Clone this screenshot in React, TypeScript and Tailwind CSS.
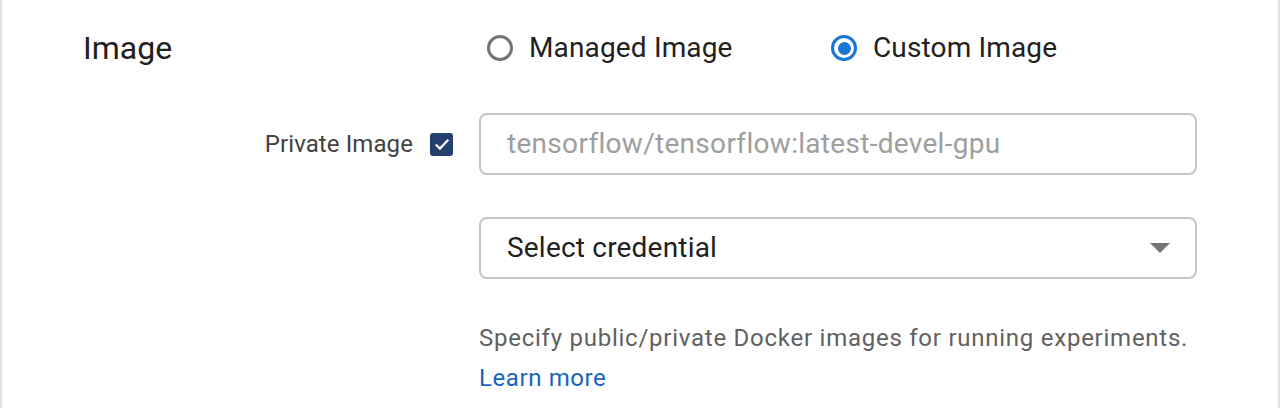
import { useState } from "react";

const Radio = ({ checked, label }: { checked: boolean; label: string }) => (
  <label className="flex items-center gap-4 cursor-pointer">
    <span
      className={`w-[26px] h-[26px] rounded-full border-[3px] flex items-center justify-center ${
        checked ? "border-[#1976d2]" : "border-[#757575]"
      }`}
    >
      {checked && <span className="w-[13px] h-[13px] rounded-full bg-[#1976d2]" />}
    </span>
    <span className="text-[28px] tracking-[0.15px] text-[#212121]">{label}</span>
  </label>
);

const App = () => {
  const [custom] = useState(true);

  return (
    <div className="h-[408px] w-[1280px] bg-white border-l-2 border-r-2 border-[#e0e0e0] font-['Roboto',sans-serif] overflow-hidden">
      <div className="flex h-[52px] mt-[22px] leading-[52px]">
        <div className="w-[477px] pl-[81px] text-[32px] text-[#212121]">Image</div>
        <div className="flex items-center">
          <div className="w-[352px] pl-[8px]">
            <Radio checked={!custom} label="Managed Image" />
          </div>
          <Radio checked={custom} label="Custom Image" />
        </div>
      </div>

      <div className="flex mt-[39px]">
        <div className="w-[477px] flex items-center justify-end gap-[17px] pr-[26px]">
          <span className="text-[24px] tracking-[0.1px] text-[#424242]">Private Image</span>
          <span className="w-[23px] h-[23px] rounded-[3px] bg-[#23406e] flex items-center justify-center">
            <svg viewBox="0 0 24 24" className="w-[20px] h-[20px]">
              <path d="M4.5 12.5l5 5L19.5 7" fill="none" stroke="white" strokeWidth="2.6" />
            </svg>
          </span>
        </div>
        <div className="w-[718px] h-[62px] border-2 border-[#c6c6c6] rounded-[8px] flex items-center px-[26px]">
          <span className="text-[28px] tracking-[0.3px] text-[#9e9e9e]">tensorflow/tensorflow:latest-devel-gpu</span>
        </div>
      </div>

      <div className="flex mt-[42px]">
        <div className="w-[477px]" />
        <div className="w-[718px] h-[62px] border-2 border-[#c6c6c6] rounded-[8px] flex items-center justify-between pl-[26px] pr-[25px]">
          <span className="text-[28px] tracking-[0.2px] text-[#212121]">Select credential</span>
          <svg viewBox="0 0 20 10" className="w-[20px] h-[10px]">
            <path d="M0 0h20L10 10z" fill="#757575" />
          </svg>
        </div>
      </div>

      <div className="flex mt-[39px]">
        <div className="w-[477px]" />
        <div className="text-[24px] leading-[40px]">
          <p className="text-[#616161] tracking-[0.75px]">Specify public/private Docker images for running experiments.</p>
          <a className="text-[#1565c0] tracking-[0.6px]">Learn more</a>
        </div>
      </div>
    </div>
  );
};

export default App;
